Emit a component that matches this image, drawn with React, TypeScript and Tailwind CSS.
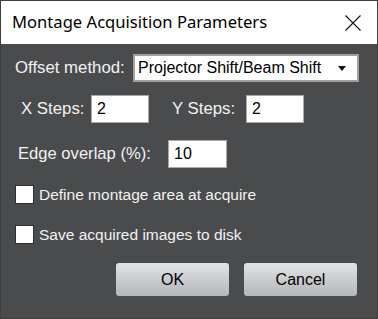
import React from "react";

const font = { fontFamily: '"Liberation Sans", Arial, sans-serif' };

function Check({ label }: { label: string }) {
  return (
    <div className="flex items-center pl-[14px]">
      <div className="w-[19px] h-[19px] bg-white border border-[#2e2e2e]" />
      <span className="ml-[5px] text-[15.5px] text-[#f2f2f2] leading-none">{label}</span>
    </div>
  );
}

function Field({ value, w = 58 }: { value: string; w?: number }) {
  return (
    <div
      className="h-[28px] bg-white border border-[#a8a8a8] flex items-center pl-[5px] text-[16px] text-black"
      style={{ width: w }}
    >
      {value}
    </div>
  );
}

export default function App() {
  return (
    <div className="w-[378px] h-[319px] border border-[#3f3f3f] flex flex-col bg-[#4a4b4d]" style={font}>
      <div className="h-[43px] bg-white flex items-center justify-between pl-[11px] pr-[16px] shrink-0">
        <span className="text-[16.6px] text-black" style={{ fontFamily: '"Noto Sans", "Liberation Sans", sans-serif' }}>
          Montage Acquisition Parameters
        </span>
        <svg width="16" height="16" viewBox="0 0 16 16">
          <path d="M0.5 0.5 L15.5 15.5 M15.5 0.5 L0.5 15.5" stroke="#111" strokeWidth="1.1" />
        </svg>
      </div>
      <div className="flex flex-col">
        <div className="flex items-center mt-[10px] pl-[14px]">
          <span className="w-[118px] text-[16.8px] text-[#f2f2f2]">Offset method:</span>
          <div className="w-[226px] h-[28px] bg-white border-2 border-[#a0a0a0] flex items-center justify-between pl-[3px] pr-[11px] text-[16px] text-black">
            <span>Projector Shift/Beam Shift</span>
            <svg width="8" height="5" viewBox="0 0 8 5">
              <path d="M0 0 H8 L4 5 Z" fill="#111" />
            </svg>
          </div>
        </div>
        <div className="flex items-center mt-[13px] pl-[20px]">
          <span className="w-[70px] text-[16.8px] text-[#f2f2f2]">X Steps:</span>
          <Field value="2" />
          <span className="ml-[23px] w-[74px] text-[16.8px] text-[#f2f2f2]">Y Steps:</span>
          <Field value="2" />
        </div>
        <div className="flex items-center mt-[17px] pl-[17px]">
          <span className="w-[150px] text-[16.6px] text-[#f2f2f2]">Edge overlap (%):</span>
          <Field value="10" w={59} />
        </div>
        <div className="mt-[17px]">
          <Check label="Define montage area at acquire" />
        </div>
        <div className="mt-[21px]">
          <Check label="Save acquired images to disk" />
        </div>
        <div className="flex justify-end gap-[15px] mt-[19px] pr-[20px]">
          <button className="w-[113px] h-[33px] rounded-[3px] bg-gradient-to-b from-[#e2e3e5] to-[#b3b5b8] text-[16px] text-black">
            OK
          </button>
          <button className="w-[113px] h-[33px] rounded-[3px] bg-gradient-to-b from-[#e2e3e5] to-[#b3b5b8] text-[16px] text-black">
            Cancel
          </button>
        </div>
      </div>
    </div>
  );
}
